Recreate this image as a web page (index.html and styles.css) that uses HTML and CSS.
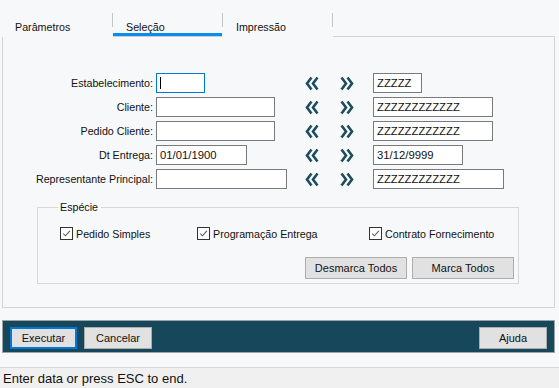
FILE: index.html
```html
<!DOCTYPE html>
<html lang="pt">
<head>
  <meta charset="UTF-8" />
  <title>Seleção</title>
  <link rel="stylesheet" href="styles.css">
</head>
<body>

  <div class="tabs">
    <div class="tab">Parâmetros</div>
    <div class="tab-sep"></div>
    <div class="tab active">Seleção</div>
    <div class="tab-sep"></div>
    <div class="tab">Impressão</div>
    <div class="tab-sep"></div>
    <div class="tab-fill"></div>
  </div>

  <div class="panel">
    <div class="form">
      <label>Estabelecimento:</label>
      <div class="field focused" style="width:49px"><span class="caret"></span></div>
      <span class="chev prev"><svg viewBox="0 0 14 15"><path d="M6.5 1.5 2 7.5 6.5 13.5M12.5 1.5 8 7.5 12.5 13.5"/></svg></span>
      <span class="chev next"><svg viewBox="0 0 14 15"><path d="M1.5 1.5 6 7.5 1.5 13.5M7.5 1.5 12 7.5 7.5 13.5"/></svg></span>
      <div class="field" style="width:49px">ZZZZZ</div>

      <label>Cliente:</label>
      <div class="field" style="width:119px"></div>
      <span class="chev prev"><svg viewBox="0 0 14 15"><path d="M6.5 1.5 2 7.5 6.5 13.5M12.5 1.5 8 7.5 12.5 13.5"/></svg></span>
      <span class="chev next"><svg viewBox="0 0 14 15"><path d="M1.5 1.5 6 7.5 1.5 13.5M7.5 1.5 12 7.5 7.5 13.5"/></svg></span>
      <div class="field" style="width:120px">ZZZZZZZZZZZZ</div>

      <label>Pedido Cliente:</label>
      <div class="field" style="width:119px"></div>
      <span class="chev prev"><svg viewBox="0 0 14 15"><path d="M6.5 1.5 2 7.5 6.5 13.5M12.5 1.5 8 7.5 12.5 13.5"/></svg></span>
      <span class="chev next"><svg viewBox="0 0 14 15"><path d="M1.5 1.5 6 7.5 1.5 13.5M7.5 1.5 12 7.5 7.5 13.5"/></svg></span>
      <div class="field" style="width:120px">ZZZZZZZZZZZZ</div>

      <label>Dt Entrega:</label>
      <div class="field" style="width:91px">01/01/1900</div>
      <span class="chev prev"><svg viewBox="0 0 14 15"><path d="M6.5 1.5 2 7.5 6.5 13.5M12.5 1.5 8 7.5 12.5 13.5"/></svg></span>
      <span class="chev next"><svg viewBox="0 0 14 15"><path d="M1.5 1.5 6 7.5 1.5 13.5M7.5 1.5 12 7.5 7.5 13.5"/></svg></span>
      <div class="field" style="width:90px">31/12/9999</div>

      <label>Representante Principal:</label>
      <div class="field" style="width:131px"></div>
      <span class="chev prev"><svg viewBox="0 0 14 15"><path d="M6.5 1.5 2 7.5 6.5 13.5M12.5 1.5 8 7.5 12.5 13.5"/></svg></span>
      <span class="chev next"><svg viewBox="0 0 14 15"><path d="M1.5 1.5 6 7.5 1.5 13.5M7.5 1.5 12 7.5 7.5 13.5"/></svg></span>
      <div class="field" style="width:131px">ZZZZZZZZZZZZ</div>
    </div>

    <fieldset class="group">
      <legend>Espécie</legend>
      <div class="checks">
        <div class="check" style="width:137px"><span class="box"><svg viewBox="0 0 13 13"><path d="M2.5 6.5 5.2 9.2 10.5 3.5"/></svg></span>Pedido Simples</div>
        <div class="check" style="width:172px"><span class="box"><svg viewBox="0 0 13 13"><path d="M2.5 6.5 5.2 9.2 10.5 3.5"/></svg></span>Programação Entrega</div>
        <div class="check"><span class="box"><svg viewBox="0 0 13 13"><path d="M2.5 6.5 5.2 9.2 10.5 3.5"/></svg></span>Contrato Fornecimento</div>
      </div>
      <div class="group-buttons">
        <button class="btn wide">Desmarca Todos</button>
        <button class="btn wide">Marca Todos</button>
      </div>
    </fieldset>
  </div>

  <div class="actions">
    <button class="btn default">Executar</button>
    <button class="btn">Cancelar</button>
    <div class="spacer"></div>
    <button class="btn">Ajuda</button>
  </div>

  <div class="status">Enter data or press ESC to end.</div>

</body>
</html>
```

FILE: styles.css
```css
body {
  margin: 0;
  font-family: 'Liberation Sans', Arial, sans-serif;
  font-size: 10.7px;
  color: #111;
  background: #f7f8fa;
  width: 559px;
  height: 388px;
  overflow: hidden;
}

/* Tabs */
.tabs {
  display: flex;
  height: 37px;
  padding-left: 2px;
}
.tab {
  width: 110px;
  box-sizing: border-box;
  padding: 20px 0 0 13px;
  line-height: 14px;
}
.tab.active {
  width: 109px;
  padding-left: 13px;
  height: 36px;
  border-bottom: 3px solid #0c8ce9;
  box-shadow: 0 1px 0 #c9cdd2;
}
.tab + .tab-sep + .tab {
  width: 109px;
}
.tab-sep {
  width: 1px;
  height: 14px;
  margin-top: 13px;
  background: #c6c6c6;
}
.tab-fill {
  flex: 1;
  border-bottom: 1px solid #d4d4d4;
  margin-right: 4px;
}

/* Main panel */
.panel {
  margin-left: 2px;
  width: 553px;
  height: 271px;
  box-sizing: border-box;
  border: 1px solid #d4d4d4;
  border-top: none;
  padding-top: 36px;
}

.form {
  display: grid;
  grid-template-columns: 153px 140px 40px 37px 1fr;
  grid-auto-rows: 20px;
  row-gap: 4px;
  align-items: center;
}
.form label {
  text-align: right;
  padding-right: 3px;
}
.field {
  height: 20px;
  box-sizing: border-box;
  border: 1px solid #7a7a7a;
  background: #fff;
  padding: 0 3px;
  line-height: 18px;
  font-size: 11.3px;
  white-space: nowrap;
  overflow: hidden;
}
.field.focused {
  border-color: #0078d7;
}
.caret {
  display: inline-block;
  width: 1px;
  height: 12px;
  background: #000;
  vertical-align: -2px;
}
.chev {
  display: flex;
  height: 20px;
  align-items: center;
}
.chev.prev {
  padding-left: 9px;
}
.chev.next {
  padding-left: 4px;
}
.chev svg {
  width: 14px;
  height: 15px;
  fill: none;
  stroke: #1d4d5d;
  stroke-width: 2.6;
}

/* Group box */
.group {
  margin: 11px 0 0 34px;
  width: 482px;
  height: 84px;
  box-sizing: border-box;
  padding: 0;
  border: 1px solid #d8d8d8;
}
.group legend {
  margin-left: 20px;
  padding: 0 3px 0 2px;
  line-height: 14px;
}
.checks {
  display: flex;
  padding: 12px 0 0 22px;
  height: 15px;
  align-items: center;
}
.check {
  display: flex;
  align-items: center;
  gap: 3px;
}
.box {
  width: 13px;
  height: 13px;
  box-sizing: border-box;
  border: 1px solid #333;
  background: #fff;
}
.box svg {
  display: block;
  width: 11px;
  height: 11px;
  fill: none;
  stroke: #555;
  stroke-width: 1.2;
}
.group-buttons {
  display: flex;
  justify-content: flex-end;
  gap: 5px;
  padding: 16px 4px 0 0;
}

/* Buttons */
.btn {
  height: 22px;
  width: 68px;
  padding: 0;
  font-family: inherit;
  font-size: 11px;
  color: #111;
  background: #e1e1e1;
  border: 1px solid #adadad;
}
.btn.wide {
  width: 102px;
}
.btn.default {
  width: 67px;
  border: 2px solid #0078d7;
}

/* Bottom bar */
.actions {
  display: flex;
  gap: 7px;
  margin: 12px 0 0 2px;
  width: 553px;
  height: 33px;
  box-sizing: border-box;
  border: 1px solid #9aa5aa;
  background: #17475a;
  padding: 6px 7px 0 7px;
}
.spacer {
  flex: 1;
}

.status {
  margin-top: 14px;
  height: 21px;
  border-top: 1px solid #d8d8d8;
  background: #f0f0f0;
  font-size: 13px;
  line-height: 21px;
  padding-left: 3px;
}
```
